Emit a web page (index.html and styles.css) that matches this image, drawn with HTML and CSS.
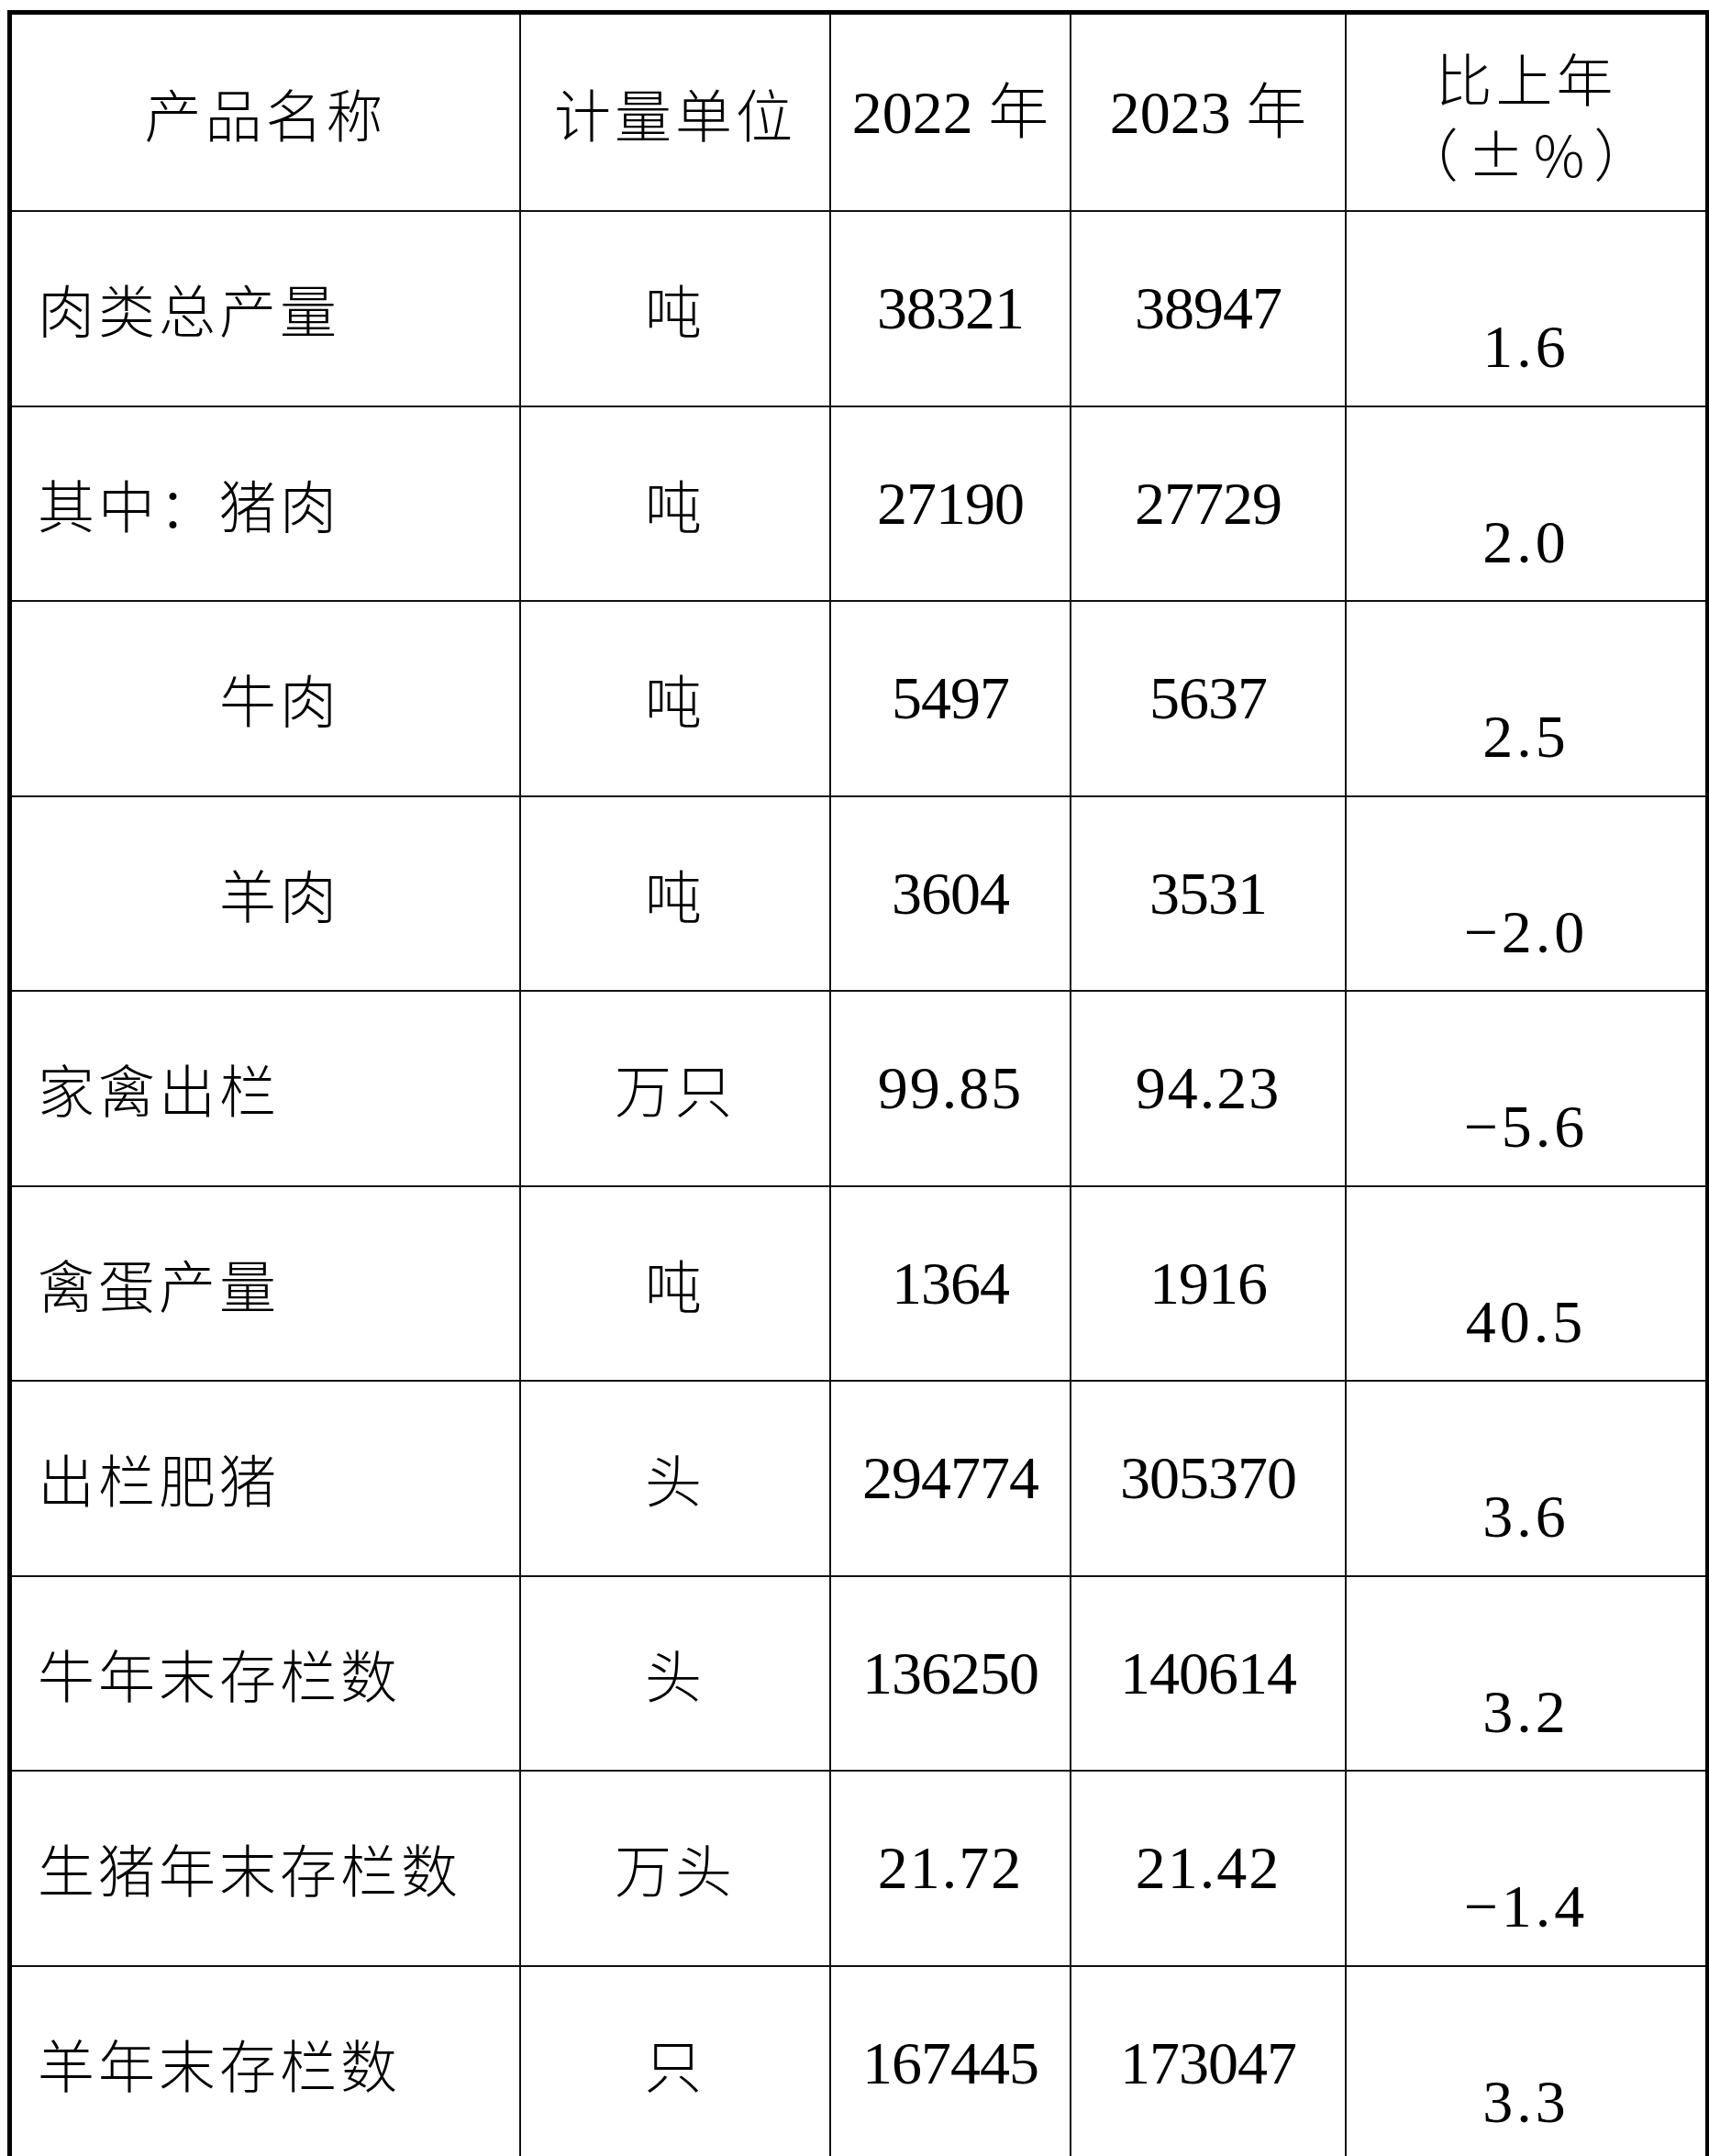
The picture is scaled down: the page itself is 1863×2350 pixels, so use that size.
FILE: index.html
```html
<!DOCTYPE html>
<html lang="zh-CN">
<head>
<meta charset="utf-8">
<title>畜牧业产品产量</title>
<link rel="stylesheet" href="styles.css">
</head>
<body>
<div class="sheet">
  <div class="cell head">产品名称</div>
  <div class="cell head">计量单位</div>
  <div class="cell head num">2022 年</div>
  <div class="cell head num">2023 年</div>
  <div class="cell head two"><div class="stack">比上年<br><span class="paren">（±%）</span></div></div>

  <div class="cell name">肉类总产量</div>
  <div class="cell unit">吨</div>
  <div class="cell num">38321</div>
  <div class="cell num">38947</div>
  <div class="cell num pct">1.6</div>

  <div class="cell name">其中：猪肉</div>
  <div class="cell unit">吨</div>
  <div class="cell num">27190</div>
  <div class="cell num">27729</div>
  <div class="cell num pct">2.0</div>

  <div class="cell name sub">牛肉</div>
  <div class="cell unit">吨</div>
  <div class="cell num">5497</div>
  <div class="cell num">5637</div>
  <div class="cell num pct">2.5</div>

  <div class="cell name sub">羊肉</div>
  <div class="cell unit">吨</div>
  <div class="cell num">3604</div>
  <div class="cell num">3531</div>
  <div class="cell num pct">−2.0</div>

  <div class="cell name">家禽出栏</div>
  <div class="cell unit">万只</div>
  <div class="cell num dec">99.85</div>
  <div class="cell num dec">94.23</div>
  <div class="cell num pct">−5.6</div>

  <div class="cell name">禽蛋产量</div>
  <div class="cell unit">吨</div>
  <div class="cell num">1364</div>
  <div class="cell num">1916</div>
  <div class="cell num pct">40.5</div>

  <div class="cell name">出栏肥猪</div>
  <div class="cell unit">头</div>
  <div class="cell num">294774</div>
  <div class="cell num">305370</div>
  <div class="cell num pct">3.6</div>

  <div class="cell name">牛年末存栏数</div>
  <div class="cell unit">头</div>
  <div class="cell num">136250</div>
  <div class="cell num">140614</div>
  <div class="cell num pct">3.2</div>

  <div class="cell name">生猪年末存栏数</div>
  <div class="cell unit">万头</div>
  <div class="cell num dec">21.72</div>
  <div class="cell num dec">21.42</div>
  <div class="cell num pct">−1.4</div>

  <div class="cell name">羊年末存栏数</div>
  <div class="cell unit">只</div>
  <div class="cell num">167445</div>
  <div class="cell num">173047</div>
  <div class="cell num pct">3.3</div>
</div>
</body>
</html>
```

FILE: styles.css
```css
html, body {
  background: #ffffff;
}

body {
  margin: 11px 0 0 8px;
  color: #000000;
  font-family: "Noto Sans CJK SC", sans-serif;
  overflow: hidden;
}

.sheet {
  box-sizing: border-box;
  width: 1856px;
  display: grid;
  grid-template-columns: 555px 338px 262px 300px 391px;
  grid-template-rows: 215px repeat(10, 212.5px);
  border-top: 5px solid #000;
  border-left: 5px solid #000;
  border-right: 5px solid #000;
}

.cell {
  box-sizing: border-box;
  display: flex;
  align-items: center;
  justify-content: center;
  border-right: 2px solid #111;
  border-bottom: 2px solid #111;
  font-family: "Noto Sans CJK SC", sans-serif;
  font-weight: 300;
  font-size: 62px;
  letter-spacing: 4px;
  line-height: 1;
  white-space: nowrap;
}

.cell:nth-child(5n) {
  border-right: none;
}

.head {
  text-align: center;
}

.two {
  line-height: 82px;
  padding-top: 4px;
}

.stack {
  display: block;
  text-align: center;
}

.paren {
  letter-spacing: 10px;
  margin-right: -10px;
}

.name {
  justify-content: flex-start;
  padding-left: 28px;
}

.sub {
  padding-left: 226px;
}

.num {
  font-family: "Liberation Serif", "Noto Sans CJK SC", serif;
  font-weight: 400;
  font-size: 66px;
  letter-spacing: -1px;
}

.head.num {
  font-weight: 300;
  letter-spacing: 0;
}

.dec {
  letter-spacing: 2px;
}

.pct {
  padding-top: 84px;
  letter-spacing: 4px;
}
```
